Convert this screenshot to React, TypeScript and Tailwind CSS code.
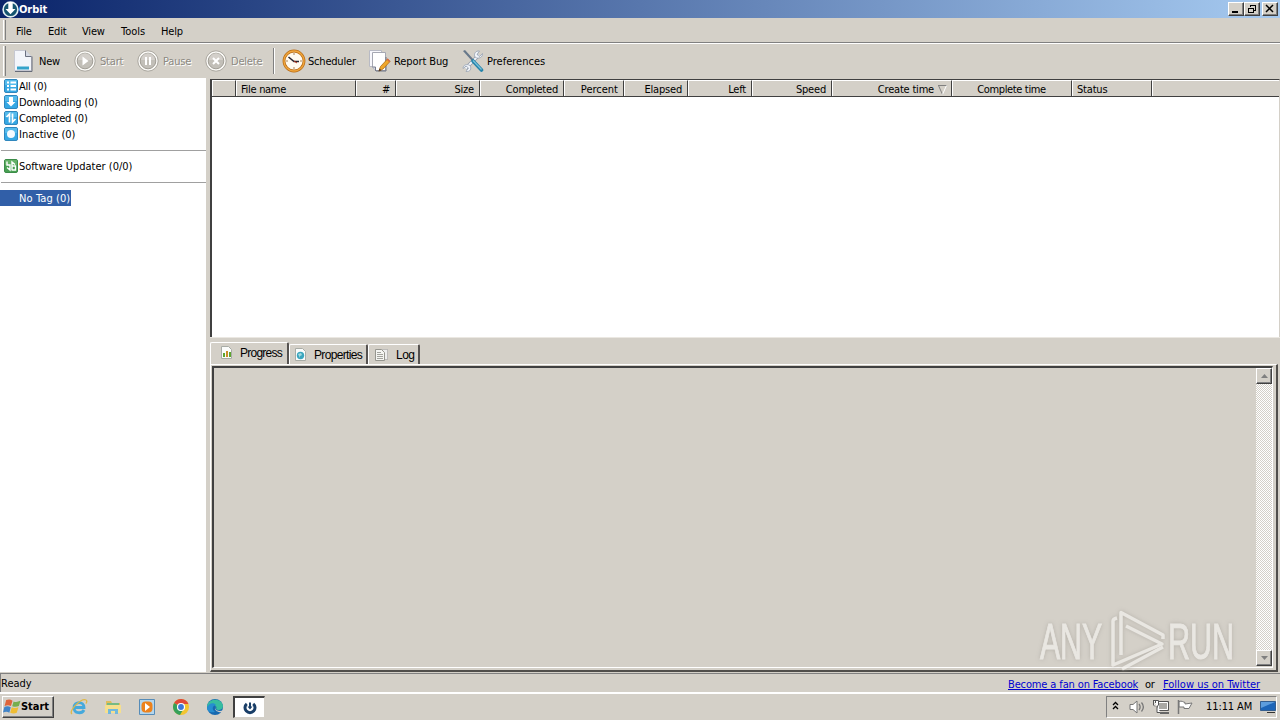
import type { ReactNode } from "react";
import { clsx } from "clsx";

const toolbar = [
  { label: "New", icon: <NewIcon />, width: "w-[60px]" },
  { label: "Start", icon: <RoundIcon kind="play" />, disabled: true, width: "w-[63px]" },
  { label: "Pause", icon: <RoundIcon kind="pause" />, disabled: true, width: "w-[68px]" },
  { label: "Delete", icon: <RoundIcon kind="x" />, disabled: true, width: "w-[68px]" },
];

const tools = [
  { label: "Scheduler", icon: <ClockIcon />, width: "w-[87px]", text: "w-[47px] tracking-[-0.2px]", gap: "gap-[2px]" },
  { label: "Report Bug", icon: <ReportIcon />, width: "w-[93px]", text: "w-[55px] tracking-[-0.1px]", gap: "gap-[3px]" },
  { label: "Preferences", icon: <ToolsIcon />, width: "w-[90px]", text: "w-[58px] tracking-[0px]", gap: "gap-[3px]" },
];

const columns = [
  { label: "", cls: "w-[24px]" },
  { label: "File name", cls: "w-[120px] justify-start tracking-[-0.300px]" },
  { label: "#", cls: "w-[40px] justify-end" },
  { label: "Size", cls: "w-[84px] justify-end" },
  { label: "Completed", cls: "w-[84px] justify-end" },
  { label: "Percent", cls: "w-[60px] justify-end tracking-[0px]" },
  { label: "Elapsed", cls: "w-[64px] justify-end" },
  { label: "Left", cls: "w-[64px] justify-end" },
  { label: "Speed", cls: "w-[80px] justify-end" },
  { label: "Create time", cls: "w-[120px] justify-end", sorted: true },
  { label: "Complete time", cls: "w-[120px] justify-center tracking-[-0.35px]" },
  { label: "Status", cls: "w-[80px] justify-start" },
];

const raised = "border border-t-white border-l-white border-r-[#404040] border-b-[#404040] shadow-[inset_-1px_-1px_0_#808080] bg-[#d4d0c8]";

function NewIcon() {
  return (
    <svg width="20" height="24" viewBox="0 0 20 24">
      <path d="M.5 1.500h11l6 6v14H.5z" fill="#f3f5fb" stroke="#c6c8d2" />
      <path d="M18 7.500v15H1" fill="none" stroke="#666b78" />
      <path d="M11.500 1.500v6h6" fill="#d5d9e4" stroke="#6b7080" />
      <path d="M3 17.500h12v3H3z" fill="#35a3cb" />
    </svg>
  );
}

function RoundIcon({ kind }: { kind: "play" | "pause" | "x" }) {
  return (
    <svg width="22" height="22" viewBox="0 0 22 22">
      <circle cx="11" cy="11" r="10.200" fill="#fbfaf7" stroke="#aaa79f" />
      <circle cx="11" cy="11" r="7.800" fill="#c2bfb8" stroke="#a19e96" />
      <path d="M4 10a7 7 0 0 1 14 0z" fill="#dedbd5" opacity=".6" />
      {kind === "play" && <path d="M8.500 6.500v9l6-4.500z" fill="#fff" />}
      {kind === "pause" && <path d="M8 7h2v8H8zM12 7h2v8h-2z" fill="#fff" />}
      {kind === "x" && <path d="M8 8l6 6M14 8l-6 6" stroke="#fff" strokeWidth="2" />}
    </svg>
  );
}

function ClockIcon() {
  return (
    <svg width="24" height="24" viewBox="0 0 24 24">
      <circle cx="12" cy="12" r="10" fill="#fffaf0" stroke="#b96c17" strokeWidth="2.800" />
      <circle cx="12" cy="12" r="10" fill="none" stroke="#f0a63c" strokeWidth="1.300" />
      <path d="M12 4v2M12 18v2M4 12h2M18 12h2" stroke="#a7835b" />
      <path d="M6.500 8l5.500 4.500h5" fill="none" stroke="#282430" strokeWidth="1.600" />
      <path d="M12 12l3 2" stroke="#b93218" />
    </svg>
  );
}

function ReportIcon() {
  return (
    <svg width="22" height="24" viewBox="0 0 22 24">
      <path d="M.5 1.500h12v16H.5z" fill="#f7f7fc" stroke="#b8bac4" />
      <path d="M3.500 3.500h13v18h-10l-3-3z" fill="#fff" stroke="#a5a7b2" />
      <path d="M17 8v14H7" fill="none" stroke="#6f7484" />
      <path d="M6.500 22v-4h-3" fill="#d7dae4" stroke="#777b8c" />
      <path d="M10 22l1.500-4.500 7-7.500 2.500 2.500-7 7.500z" fill="#f0a72b" stroke="#b36d15" strokeWidth=".8" />
      <path d="M9.500 22.500l1-3 2 1.800z" fill="#4f3929" />
      <path d="M17.500 10.500l2.800 2.700 1-1.200-2.700-2.800z" fill="#d86a41" />
    </svg>
  );
}

function ToolsIcon() {
  return (
    <svg width="22" height="24" viewBox="0 0 22 24">
      <path d="M3.500 19.500L17 6" stroke="#8c97a4" strokeWidth="3.600" />
      <path d="M3.500 19.500L17 6" stroke="#f2f5fa" strokeWidth="2.200" />
      <path d="M20.500 4.500l-3 3-2.500-2 2.500-3.500c-4-.5-6 3-4.500 6 3 2.500 8 .5 7.500-3.500zM1 19.500l3-2.500 2.500 2-2.500 3.500c4 .5 6-2.500 4-6-3.500-2-7-.5-7 3z" fill="#f2f5fa" stroke="#96a1b1" strokeWidth=".8" />
      <path d="M1 2l2-1 9 10-1.500 1.500z" fill="#67788b" />
      <path d="M11 12l8.500 9" stroke="#2684aa" strokeWidth="3.600" strokeLinecap="round" />
      <path d="M11 11.500l8.500 9" stroke="#79c2db" strokeWidth="1.200" />
    </svg>
  );
}

function OrbitIcon() {
  return (
    <svg width="17" height="17" viewBox="0 0 17 17" className="shrink-0">
      <circle cx="8.500" cy="8.500" r="7.400" fill="#14546f" stroke="#e3f0f2" strokeWidth="1.600" />
      <path d="M6.300 1h4.400v7h2.800l-5 5.300-5-5.300h2.800z" fill="#fff" />
    </svg>
  );
}

function SideIcon({ kind }: { kind: "list" | "down" | "done" | "idle" | "update" }) {
  const green = kind === "update";
  return (
    <svg width="14" height="14" viewBox="0 0 14 14" className="shrink-0">
      <rect x=".5" y=".5" width="13" height="13" rx="1.500" fill={green ? "#48a052" : "#35a8e4"} stroke={green ? "#3c8c49" : "#3087bd"} />
      <path d="M1 1h12v5H1z" fill={green ? "#79bd77" : "#69c8f2"} opacity=".6" />
      {kind === "list" && <path d="M3 3.500h2M3 7h2M3 10.500h2M6.500 3.500H12M6.500 7H12M6.500 10.500H12" stroke="#fff" strokeWidth="1.800" />}
      {kind === "down" && <path d="M5 2h4v5h2.500L7 11.500 2.500 7H5z" fill="#fff" />}
      {kind === "done" && <path d="M5.500 11.500V3L2.500 6M8.500 2.500V11l3-3" fill="none" stroke="#fff" strokeWidth="1.700" />}
      {kind === "idle" && <circle cx="7" cy="7" r="4" fill="#f4fbff" />}
      {kind === "update" && <path d="M3 2.500V6h3v5L3 8.500M8 11.500V3l3 2.500M8 7h3.500v4H8" fill="none" stroke="#fff" strokeWidth="1.400" />}
    </svg>
  );
}

// Text sits one pixel below the middle of its row.
function Label({ children, className }: { children: string; className?: string }) {
  return <span className={clsx("block pt-[2px] whitespace-nowrap", className)}>{children}</span>;
}

function SideRow({ icon, tracking, children }: { icon: ReactNode; tracking?: string; children: string }) {
  return (
    <div className="h-4 pl-1 flex items-center gap-px">
      {icon}
      <Label className={tracking}>{children}</Label>
    </div>
  );
}

function Grip({ height }: { height: string }) {
  return <span className={clsx("w-[3px] shrink-0 border-l border-l-white border-r border-r-[#808080]", height)} />;
}

function TabIcon({ kind }: { kind: "bars" | "globe" | "log" }) {
  return (
    <svg width="13" height="14" viewBox="0 0 13 14" className="shrink-0">
      {kind === "log" ? (
        <>
          <path d="M4.500 1.500h8v10h-8z" fill="#eee" stroke="#999" strokeDasharray="1 1" />
          <path d="M.5 1.500h6l3 3v8h-9z" fill="#f5f5f2" stroke="#96968f" />
          <path d="M2 4.500h4M2 6.500h6M2 8.500h6M2 10.500h6" stroke="#a3a39d" />
        </>
      ) : (
        <path d="M1.500.5h7l3 3v9h-10z" fill="#fbfcfb" stroke="#a8aca6" />
      )}
      {kind === "bars" && <path d="M3 11V7h2v4zM9 11V6h2v5z" fill="#5da52f" />}
      {kind === "bars" && <path d="M6 11V5h2v6z" fill="#cb8d27" />}
      {kind === "globe" && <circle cx="6.500" cy="7.500" r="3.700" fill="#3ba6be" />}
      {kind === "globe" && <path d="M4 6l3-1 1 2-2 1v2z" fill="#a6dae0" />}
    </svg>
  );
}

function Tab({ label, icon, active, className }: { label: string; icon: ReactNode; active?: boolean; className: string }) {
  return (
    <div
      className={clsx(
        "flex items-center border-t border-l border-t-white border-l-white border-r-2 border-r-[#555250] rounded-t-[2px] font-['Liberation_Sans',Arial,sans-serif] text-[12px]",
        active ? "h-[22px] pl-[9px] pb-[2px]" : "h-[20px] pt-px",
        className,
      )}
    >
      {icon}
      <span className="whitespace-nowrap">{label}</span>
    </div>
  );
}

function WindowButton({ kind, className }: { kind: "min" | "restore" | "close"; className?: string }) {
  return (
    <button className={clsx("w-4 h-[14px] flex items-center justify-center", raised, className)}>
      <svg width="12" height="10" viewBox="0 0 12 10" fill="none" stroke="#000" shapeRendering="crispEdges">
        {kind === "min" && <path d="M2 8h6" strokeWidth="2" />}
        {kind === "restore" && <path d="M4 3V1h5v5H8M4 1.500h5M2.500 4v4.500h5V4zM2 4.500h6" />}
        {kind === "close" && <path d="M2 1l7 7M9 1L2 8" strokeWidth="1.500" shapeRendering="auto" />}
      </svg>
    </button>
  );
}

function ScrollButton({ up }: { up?: boolean }) {
  return (
    <div className={clsx("size-4 flex items-center justify-center", raised)}>
      <svg width="7" height="4" viewBox="0 0 7 4">
        <path d={up ? "M0 4h7L3.500 0z" : "M0 0h7L3.500 4z"} fill="#808080" />
      </svg>
    </div>
  );
}

function Watermark() {
  return (
    <div className="absolute left-[1036px] top-[606px] text-[#f1efeb] opacity-75 pointer-events-none drop-shadow-[0_0_2px_#aaa69f]">
      <svg width="243" height="68" viewBox="-3 -3 243 68">
        <g fill="currentColor" stroke="currentColor" strokeWidth="1" fontFamily="Liberation Sans Narrow, Liberation Sans, sans-serif" fontSize="50">
          <text x="1" y="50" textLength="62" lengthAdjust="spacingAndGlyphs">ANY</text>
          <text x="129" y="50" textLength="66" lengthAdjust="spacingAndGlyphs">RUN</text>
        </g>
        <g fill="none" stroke="currentColor" strokeWidth="3.500" strokeLinejoin="round">
          <path d="M82 46V3.500L124 26v4" />
          <path d="M87 17l36 18L74 56V12q0-2 4-3" />
          <path d="M83 60l41-22" />
        </g>
      </svg>
    </div>
  );
}

function StartLogo() {
  return (
    <svg width="18" height="18" viewBox="0 0 17 16" className="shrink-0">
      <path d="M3 1.500c2-1 4-1 6 .5L7.500 7C5.500 6 4 6 1.500 7z" fill="#df643a" />
      <path d="M10 2.700c2 1 4 .5 6.500-.5L15 7c-2 1-4 1-6.300.2z" fill="#76ae4d" />
      <path d="M1.300 8c2-1 4-1 6 .3L6 13.500c-2-1.500-4-1-6-.3z" fill="#4184c8" />
      <path d="M8.300 8.300c2 1 4 .7 6.300 0L13 13.500c-2 1-4 1-6.200 0z" fill="#efbd34" />
    </svg>
  );
}

function TaskIcon({ kind }: { kind: "ie" | "folder" | "media" | "chrome" | "edge" }) {
  return (
    <svg width="18" height="18" viewBox="0 0 18 18">
      {kind === "ie" && (
        <>
          <path d="M14 12c-2 4-10 4-10-2.500S14 3 14 9.500H5" fill="none" stroke="#45a9dc" strokeWidth="2.800" />
          <path d="M2 16C-2 13 11 0 16 2c1.500.7.500 2.500 0 3.500" fill="none" stroke="#dfb847" strokeWidth="1.300" />
        </>
      )}
      {kind === "folder" && (
        <>
          <path d="M2 3h5l1 2h8v9H2z" fill="#dfbd5b" />
          <path d="M3 5h12v3H3z" fill="#76ba83" />
          <path d="M1 7h16v8H1z" fill="#f5df8e" />
          <path d="M4 16v-5h10v5h-3v-3H7v3z" fill="#71b8dd" />
        </>
      )}
      {kind === "media" && (
        <>
          <path d="M1.500 1.500h15v15h-15z" fill="#b4d6ed" stroke="#568cb8" />
          <rect x="3.500" y="3.500" width="11" height="11" rx="4" fill="#ed821c" />
          <path d="M7 5v8l5-4z" fill="#fff" />
        </>
      )}
      {kind === "chrome" && (
        <>
          <circle cx="9" cy="9" r="8" fill="#f2c530" />
          <path d="M9 9L2.100 5A8 8 0 0 1 16.500 6H9z" fill="#df493a" />
          <path d="M9 9L2.100 5A8 8 0 0 0 8 17l4-7z" fill="#35a05b" />
          <circle cx="9" cy="9" r="3.500" fill="#3b78d8" stroke="#fff" strokeWidth="1.200" />
        </>
      )}
      {kind === "edge" && (
        <>
          <circle cx="9" cy="9" r="8" fill="#1769b0" />
          <path d="M1 9C1 0 16-1 17 8c0 4-5 5-7 3 2-3-3-7-9-2z" fill="#37bd9f" />
          <path d="M1 10c1-5 7-6 9-3-3 0-5 4-1 7-4 1-8-.5-8-4z" fill="#268ed0" />
          <path d="M9.500 8c-1.500 3 1 6 7.500 4.500l1 1.500c-5 1-9-1-9-3.500 0-1 0-2 .5-2.500z" fill="#d4d0c8" />
        </>
      )}
    </svg>
  );
}

function Tray() {
  return (
    <div className="w-[171px] h-[22px] flex items-center border-t border-l border-[#808080] border-r border-b border-r-white border-b-white pl-[5px]">
      <svg width="7" height="9" viewBox="0 0 7 9" fill="none" stroke="#000" strokeWidth="1.300" className="mb-1">
        <path d="M1 4l2.500-2.500L6 4M1 8l2.500-2.500L6 8" />
      </svg>
      <svg width="17" height="16" viewBox="0 0 17 16" className="ml-[10px]" fill="none">
        <path d="M1 5.500h3L8 2v12l-4-3.500H1z" fill="#fff" stroke="#777" />
        <path d="M10 5c1.500 2 1.500 4 0 6M12.500 3.500c2.500 3 2.500 6 0 9" stroke="#777" strokeWidth="1.300" />
      </svg>
      <svg width="17" height="16" viewBox="0 0 17 16" className="ml-[7px]">
        <path d="M4.500 2.500h11v9h-11z" fill="#aaa9a5" stroke="#555" />
        <path d="M5.500 3.500h9v7h-9z" fill="none" stroke="#fff" />
        <path d="M7 14h9" stroke="#666" strokeWidth="2" />
        <path d="M.5 1.500h5V6l-1.500 1.500v6h3.500M2 7.500L.5 6V1M2.500 1v3" fill="#fff" stroke="#555" />
      </svg>
      <svg width="17" height="16" viewBox="0 0 17 16" className="ml-[7px]">
        <path d="M2 2.500c3-1 4 .5 6 1v1.500l7-1-3 5.500H7V8H2z" fill="#fff" stroke="#777" />
        <path d="M1.500 1v14" stroke="#777" strokeWidth="1.500" />
      </svg>
      <span className="ml-[12px] w-[50px] whitespace-nowrap tracking-[-0.100px]">11:11 AM</span>
      <svg width="16" height="14" viewBox="0 0 16 14" className="ml-1">
        <path d="M.5 1.500h15v9H.5z" fill="#1d65b8" stroke="#345e8f" />
        <path d="M1 2h14L1 8z" fill="#5d9ddd" />
        <path d="M7 12.500h8" stroke="#333" />
      </svg>
    </div>
  );
}

export default function App() {
  return (
    <div className="relative w-[1280px] h-[720px] flex flex-col overflow-hidden bg-[#d4d0c8] text-black text-[11px] leading-[14px] tracking-[-0.2px] font-['DejaVu_Sans_Condensed','DejaVu_Sans',sans-serif]">
      {/* Title bar */}
      <header className="h-[18px] shrink-0 flex items-center pl-[2px] pr-[2px] bg-linear-to-r/srgb from-[#0a246a] to-[#a6caf0] text-white">
        <OrbitIcon />
        <b className="pt-px tracking-[-0.05px]">Orbit</b>
        <WindowButton kind="min" className="ml-auto" />
        <WindowButton kind="restore" />
        <WindowButton kind="close" className="ml-[2px]" />
      </header>

      {/* Menu */}
      <nav className="h-[25px] shrink-0 flex items-center border-b border-[#808080] pl-[3px]">
        <Grip height="h-[20px]" />
        <div className="ml-[10px] pt-px flex">
          <Label className="w-[32px]">File</Label>
          <Label className="w-[34px]">Edit</Label>
          <Label className="w-[39px] tracking-[-0.2px]">View</Label>
          <Label className="w-[40px] tracking-[0px]">Tools</Label>
          <Label>Help</Label>
        </div>
      </nav>

      {/* Toolbar */}
      <div className="h-[35px] shrink-0 flex items-center border-t border-white pl-[3px]">
        <Grip height="h-[30px]" />
        <div className="flex items-center pl-[8px]">
          {toolbar.map((t) => (
            <div key={t.label} className={clsx("flex items-center shrink-0", t.width, t.label === "New" ? "gap-[5px]" : "gap-[4px]", t.disabled && "text-[#8c8982] [text-shadow:1px_1px_0_#fff]")}>
              {t.icon}
              <Label>{t.label}</Label>
            </div>
          ))}
        </div>
        <div className="h-[26px] w-[2px] border-l border-[#808080] border-r border-r-white" />
        <div className="flex items-center pl-[7px]">
          {tools.map((t) => (
            <div key={t.label} className={clsx("flex items-center", t.gap, t.width)}>
              {t.icon}
              <Label className={t.text}>{t.label}</Label>
            </div>
          ))}
        </div>
      </div>

      <main className="h-[594px] shrink-0 flex">
        {/* Categories */}
        <aside className="w-[206px] shrink-0 bg-white">
          <SideRow icon={<SideIcon kind="list" />}>All (0)</SideRow>
          <SideRow icon={<SideIcon kind="down" />}>Downloading (0)</SideRow>
          <SideRow icon={<SideIcon kind="done" />}>Completed (0)</SideRow>
          <SideRow icon={<SideIcon kind="idle" />} tracking="tracking-[0px]">Inactive (0)</SideRow>
          <div className="h-4 pt-2 pl-px"><div className="h-px bg-[#a0a0a0]" /></div>
          <SideRow icon={<SideIcon kind="update" />} tracking="tracking-[0px]">Software Updater (0/0)</SideRow>
          <div className="h-4 pt-2 pl-px"><div className="h-px bg-[#a0a0a0]" /></div>
          <div className="w-[71px] h-4 pl-[19px] flex items-center bg-[#315fa8] text-white">
            <Label className="tracking-[0.1px]">No Tag (0)</Label>
          </div>
        </aside>

        <div className="flex-1 min-w-0 pl-[4px] pt-px">
          {/* Download list */}
          <section className="h-[258px] flex flex-col bg-white border-l-2 border-t border-l-[#404040] border-t-[#404040] border-r border-r-[#d4d0c8]">
            <div className="h-[17px] shrink-0 flex bg-[#d4d0c8] border-b border-[#404040]">
              {columns.map((c, i) => (
                <div key={i} className={clsx("flex items-center pt-[2px] pl-[4px] pr-[5px] border-t border-l border-t-white border-l-white border-r border-r-[#404040] whitespace-nowrap", c.cls)}>
                  {c.label}
                  {c.sorted && (
                    <svg width="9" height="10" viewBox="0 0 9 10" className="ml-[4px] mr-[-1px]">
                      <path d="M0 .5h9" stroke="#808080" />
                      <path d="M.5.500l4 9" stroke="#808080" />
                      <path d="M4.500 9.500l4-9" stroke="#fff" />
                    </svg>
                  )}
                </div>
              ))}
              <div className="flex-1 border-t border-l border-white" />
            </div>
          </section>

          {/* Detail tabs */}
          <section className="h-[335px] flex flex-col pt-[6px] border-t border-[#ebe8e2]">
            <div className="h-[20px] shrink-0 flex items-end">
              <Tab label="Progress" icon={<TabIcon kind="bars" />} active className="w-[79px] gap-[7px] tracking-[-0.75px]" />
              <Tab label="Properties" icon={<TabIcon kind="globe" />} className="w-[79px] pl-[4px] gap-[7px] tracking-[-0.65px]" />
              <Tab label="Log" icon={<TabIcon kind="log" />} className="w-[52px] pl-[6px] gap-[8px] tracking-[-0.500px]" />
            </div>
            <div className="flex-1 w-[1068px] flex pt-px pl-px pr-[3px] pb-[2px] border-l border-l-white border-t border-t-white border-r-2 border-r-[#504e4b] border-b-2 border-b-[#504e4b]">
              <div className="flex-1 flex justify-end pb-px border-t-2 border-l-2 border-r border-b border-t-[#404040] border-l-[#404040] border-r-white border-b-white">
                <div className="w-4 flex flex-col justify-between bg-[repeating-conic-gradient(#fff_0_25%,#d4d0c8_0_50%)] bg-[length:2px_2px]">
                  <ScrollButton up />
                  <ScrollButton />
                </div>
              </div>
            </div>
          </section>
        </div>
      </main>

      {/* Status bar */}
      <footer className="h-[20px] shrink-0 pt-px flex">
        <div className="flex-1 flex items-center justify-between border-t border-l border-[#808080] pr-[20px]">
          <Label className="tracking-[0px]">Ready</Label>
          <div className="flex items-center pt-[4px]">
            <a className="w-[137px] whitespace-nowrap text-[#0000d0] underline tracking-[-0.13px]">Become a fan on Facebook</a>
            <span className="w-[18px]">or</span>
            <a className="w-[97px] whitespace-nowrap text-[#0000d0] underline tracking-[0px]">Follow us on Twitter</a>
          </div>
        </div>
      </footer>

      {/* Taskbar */}
      <div className="h-[28px] shrink-0 flex items-center border-t-2 border-white pl-[2px] pr-[3px]">
        <button className={clsx("w-[52px] h-[22px] flex items-center font-bold tracking-[-0.05px]", raised)}>
          <StartLogo />
          Start
        </button>
        <div className="flex items-center gap-[16px] pl-[16px]">
          <TaskIcon kind="ie" />
          <TaskIcon kind="folder" />
          <TaskIcon kind="media" />
          <TaskIcon kind="chrome" />
          <TaskIcon kind="edge" />
        </div>
        <div className="ml-[9px] w-[32px] h-[22px] flex items-center justify-center bg-white border-t-2 border-l-2 border-r border-b border-t-[#404040] border-l-[#404040] border-r-[#d4d0c8] border-b-[#d4d0c8]">
          <svg width="14" height="14" viewBox="0 0 14 14">
            <path d="M3.800 2.800a5 5 0 1 0 6.400 0" fill="none" stroke="#193e67" strokeWidth="3" />
            <path d="M6 1.500h2v4h1.500L7 8.500 4.500 5.500H6z" fill="#193e67" />
          </svg>
        </div>
        <div className="ml-auto"><Tray /></div>
      </div>

      <Watermark />
    </div>
  );
}
